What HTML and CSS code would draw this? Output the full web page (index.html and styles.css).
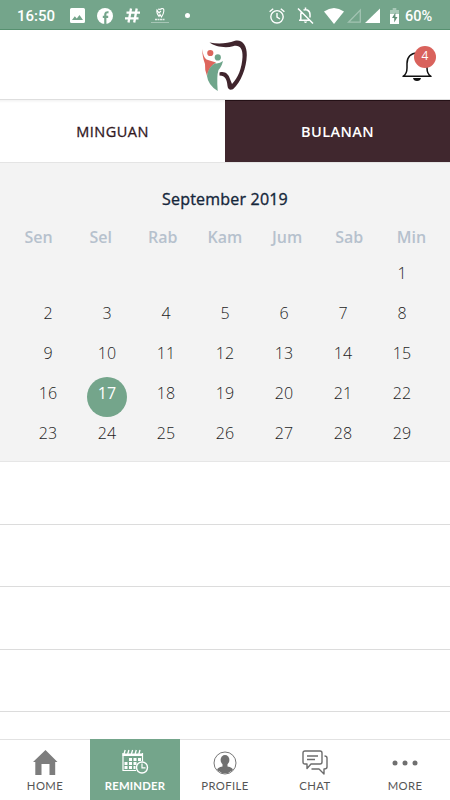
FILE: index.html
```html
<!DOCTYPE html>
<html lang="id">
<head>
<meta charset="utf-8">
<title>Reminder</title>
<link rel="stylesheet" href="styles.css">
</head>
<body>
<div class="app">
  <div class="status">
    <span class="clock">16:50</span>
    <svg class="s-pic" width="15" height="15" viewBox="0 0 15 15"><path fill="#fff" fill-rule="evenodd" d="M1.500 0h12Q15 0 15 1.500v12q0 1.500-1.500 1.500h-12Q0 15 0 13.500v-12Q0 0 1.500 0ZM2 12h11L9.500 7l-2.700 3.500-2-2.300Z"/></svg>
    <svg class="s-fb" width="16" height="16" viewBox="0 0 16 16"><circle cx="8" cy="8" r="8" fill="#fff"/><path d="M8.300 16V6.500q0-2.600 3.200-2.200M5.800 8.900h5.400" fill="none" stroke="#74a58b" stroke-width="2.200"/></svg>
    <svg class="s-hash" width="15" height="15" viewBox="0 0 15 15"><path d="M6 .5 3.500 14.500M11.700.5 9.200 14.500M1.500 4.700H15M0 10.300h13.500" fill="none" stroke="#fff" stroke-width="2.300"/></svg>
    <svg class="s-tooth" width="18" height="16" viewBox="0 0 18 16"><path d="M7 1q2 1 4-.5c3-.5 2 5-.5 8.500L9 6.500 8 8.500C6 6 5.500 4 6 2l2 3 2-2" fill="none" stroke="#fff" stroke-width="1.100"/><path d="M4 11.500h10" stroke="#e4eee9" stroke-width="1.600" stroke-dasharray="2 .5"/><path d="M0 14.500h18" stroke="#bcd4c8" stroke-width=".7"/></svg>
    <svg class="s-dot" width="5" height="5" viewBox="0 0 5 5"><circle cx="2.500" cy="2.500" r="2.500" fill="#fff"/></svg>
    <svg class="s-alarm" width="16" height="16" viewBox="0 0 16 16"><g fill="none" stroke="#fff" stroke-width="1.400"><circle cx="8" cy="8.800" r="6.200"/><path d="M.6 3.700 4.200.8M15.400 3.700 11.800.8M8 5v4.200l3 1.800"/></g></svg>
    <svg class="s-mute" width="17" height="17" viewBox="0 0 17 17"><path d="M3.800 13.200V7.500q0-2 1-3M6.500 3.100q1.700-.8 3.700-.1 2.800 1.200 2.800 4.500v3M2 13.200h11M8.500.5v2M1 1.500l15 15" fill="none" stroke="#fff" stroke-width="1.500"/><path d="M6.800 14.500h3.400q-1.700 3.200-3.400 0Z" fill="#fff"/></svg>
    <svg class="s-wifi" width="20" height="16" viewBox="0 0 20 16"><path d="M0 3.500q10-7 20 0L10 16Z" fill="#fff"/></svg>
    <svg class="s-sig1" width="14" height="15" viewBox="0 0 14 15"><path d="M1.500 14.200 13.300 2v12.200Z" fill="none" stroke="#a2c3b2" stroke-width="1.300"/></svg>
    <svg class="s-sig2" width="15" height="15" viewBox="0 0 15 15"><path d="M0 15 15 .5V15Z" fill="#fff"/></svg>
    <svg class="s-bat" width="9" height="16" viewBox="0 0 9 16"><path d="M0 2h2.700V0h3.600v2H9v4H0Z" fill="#a9c9b8"/><path d="M0 6h9v10H0Z" fill="#fff"/><path d="M5.400 4.500 2 10h2.200v4.500L7.500 9H5.400Z" fill="#619078"/></svg>
    <span class="percent">60%</span>
  </div>

  <header class="header">
    <svg class="logo" width="46" height="50" viewBox="0 0 46 50">
      <path d="M7.500 1.500C17 3.500 25 2.500 33-.2 40-1.800 45 4 44.800 14 44.500 27 39 41 31 48.300 28 49.500 26 48.500 25.500 45 25 39 23.500 34.500 17.500 34.500V31.500C23 30 26.500 33 28 38L30 43C36 37 40 27 40.500 16 41 7 37 3.500 31 5.300 23 7.500 13 5.500 7.500 1.500Z" fill="#40252d"/>
      <path d="M.4 8Q1 16 4.500 18.500L14 21.500Q6.500 26 5 35 2.500 29 3 23 0 15 .4 8Z" fill="#dd665d"/>
      <path d="M21 20Q19.500 26 16.500 29 14.500 35 15.700 50 6 44 5 35 6 26 13 22.300 17.500 23 21 20Z" fill="#6fa58b"/>
      <circle cx="8.300" cy="12" r="3.100" fill="#dd665d"/><circle cx="15.800" cy="16.400" r="3.100" fill="#6fa58b"/>
    </svg>
    <div class="bell">
      <svg width="30" height="31" viewBox="0 0 30 31"><path d="M1 25.300Q5 23 5 17V12.500C5 6 9 2 15 2s10 4 10 10.500V17q0 6 4 8.300Z" fill="#fff" stroke="#111" stroke-width="1.500" stroke-linejoin="round"/><path d="M11 27h8q-.5 3-4 3T11 27Z" fill="#111"/></svg>
      <span class="badge">4</span>
    </div>
  </header>

  <div class="tabs"><div class="tab">MINGUAN</div><div class="tab active">BULANAN</div></div>

  <section class="calendar">
    <h1 class="month">September 2019</h1>
    <div class="week"><span>Sen</span><span>Sel</span><span>Rab</span><span>Kam</span><span>Jum</span><span>Sab</span><span>Min</span></div>
    <div class="days">
      <span class="first">1</span>
      <span>2</span><span>3</span><span>4</span><span>5</span><span>6</span><span>7</span><span>8</span>
      <span>9</span><span>10</span><span>11</span><span>12</span><span>13</span><span>14</span><span>15</span>
      <span>16</span><span class="today">17</span><span>18</span><span>19</span><span>20</span><span>21</span><span>22</span>
      <span>23</span><span>24</span><span>25</span><span>26</span><span>27</span><span>28</span><span>29</span>
    </div>
  </section>

  <div class="list"><div class="row"></div><div class="row"></div><div class="row"></div><div class="row"></div></div>

  <nav class="nav">
    <div class="item"><svg width="26" height="26" viewBox="0 0 26 26"><path d="M13.500 0 25.500 12h-2.300v13h-5.700V14H9.500v11H3.300V12H1Z" fill="#7d7d7d"/></svg><span class="label">HOME</span></div>
    <div class="item on"><svg width="26" height="26" viewBox="0 0 26 26"><path d="M1 3v17.500h13M20.500 3v8.500" fill="none" stroke="#fff" stroke-width="1.200"/><path d="M.5 3.500h20.500v2.500H.5Z" fill="#fff"/><path d="m2 4 1.200-4M5.700 4 6.900 0M9.400 4 10.600 0M13.100 4 14.300 0M16.800 4 18 0" stroke="#fff" stroke-width="1.300"/><path d="M7 8h3v3H7ZM11.500 8h3v3h-3ZM16 8h3v3h-3ZM2.500 12h3v3h-3ZM7 12h3v3H7ZM11.500 12h3v3h-3ZM2.500 16h3v3h-3ZM7 16h3v3H7ZM11.500 16h2v3h-2Z" fill="#fff"/><circle cx="20" cy="17.500" r="5.500" fill="#74a58b" stroke="#fff" stroke-width="1.400"/><path d="M20 13.500v4.300h3.500" fill="none" stroke="#fff" stroke-width="1.200"/></svg><span class="label">REMINDER</span></div>
    <div class="item"><svg width="26" height="26" viewBox="0 0 26 26"><defs><clipPath id="face"><circle cx="13" cy="13" r="10.300"/></clipPath></defs><circle cx="13" cy="13" r="11" fill="#fff" stroke="#777" stroke-width="1"/><g fill="#707070" clip-path="url(#face)"><ellipse cx="13" cy="10" rx="4.400" ry="5"/><path d="M10.500 14h5v2.500q5 .5 6.500 4.500v4H4v-4q1.500-4 6.500-4.500Z"/></g></svg><span class="label">PROFILE</span></div>
    <div class="item"><svg width="26" height="26" viewBox="0 0 26 26"><g fill="none" stroke="#6c6c6c" stroke-width="1.400" stroke-linejoin="round"><path d="M3 1h15q2 0 2 2v9q0 2-2 2H9l-4 4.500V14H3q-2 0-2-2V3q0-2 2-2ZM5 6h11M5 9.500h8"/><path d="M22.500 6q2.500 0 2.500 2v9q0 2-3 2v5l-5-5H9.500"/></g></svg><span class="label">CHAT</span></div>
    <div class="item"><svg width="26" height="26" viewBox="0 0 26 26"><g fill="#707070"><circle cx="3" cy="13" r="2.500"/><circle cx="13" cy="13" r="2.500"/><circle cx="23" cy="13" r="2.500"/></g></svg><span class="label">MORE</span></div>
  </nav>
</div>
</body>
</html>
```
FILE: styles.css
```css
* { box-sizing: border-box; }
body { margin: 0; background: #fff; font-family: "Open Sans", "Noto Sans", sans-serif; }
svg { display: block; flex: none; overflow: visible; }
.app { width: 450px; height: 800px; display: flex; flex-direction: column; overflow: hidden; }

.status { height: 30px; flex: none; display: flex; align-items: center; background: #74a58b; border-bottom: 1px solid #56906f; color: #fff; padding: 2px 0 0 17px; font: 500 15px/27px Roboto, sans-serif; }
.clock { width: 53px; padding-top: 1px; }
.s-fb { margin-left: 12px; }
.s-hash { margin-left: 12px; }
.s-tooth { margin-left: 11px; }
.s-dot { margin-left: 16px; }
.s-alarm { margin-left: 79px; }
.s-mute { margin-left: 12px; }
.s-wifi { margin-left: 10px; }
.s-sig1 { margin-left: 3px; }
.s-sig2 { margin-left: 4px; }
.s-bat { margin-left: 10px; }
.percent { margin-left: 6px; padding-top: 1px; font-size: 14.5px; }

.header { height: 70px; flex: none; display: flex; justify-content: space-between; padding: 11px 17px 0 202px; border-bottom: 1px solid #dedede; }
.bell { position: relative; width: 31px; padding-top: 10px; }
.badge { position: absolute; left: 12px; top: 5px; width: 22px; height: 22px; border-radius: 50%; background: #d9625c; color: #fff; text-align: center; font: 12px/20px "Open Sans", sans-serif; }

.tabs { height: 63px; flex: none; display: flex; border-bottom: 1px solid #e4e4e4; }
.tab { flex: 1; text-align: center; color: #31171e; font-size: 14.5px; font-weight: 400; letter-spacing: .5px; line-height: 63px; -webkit-text-stroke: .3px; background: linear-gradient(#f3f3f3, #fff 3px); }
.tab.active { background: #40272e; color: #fff; font-weight: 600; letter-spacing: .4px; -webkit-text-stroke: 0; border-top: 1px solid #241016; line-height: 61px; }

.calendar { height: 299px; flex: none; background: #f3f3f3; border-bottom: 1px solid #e6e6e6; }
.month { margin: 0; padding-top: 24px; text-align: center; font-size: 16px; font-weight: 400; letter-spacing: .2px; line-height: 24px; color: #14263a; -webkit-text-stroke: .35px; }
.week { display: grid; grid-template-columns: repeat(7, 1fr); margin: 14px 7.5px 0; text-align: center; color: #b6c1cd; font-size: 16px; font-weight: 600; line-height: 24px; }
.days { display: grid; grid-template-columns: repeat(7, 59px); grid-auto-rows: 40px; justify-content: center; margin-top: 4px; text-align: center; color: #1c1c1c; font-size: 16px; font-weight: 300; line-height: 40px; }
.first { grid-column: 7; }
.today { width: 40px; height: 40px; margin: 4px auto 0; border-radius: 50%; background: #74a58b; color: #fff; line-height: 32px; font-weight: 400; }

.list { flex: 1; overflow: hidden; }
.row { height: 62.5px; border-bottom: 1px solid #dcdcdc; }

.nav { height: 61px; flex: none; display: grid; grid-template-columns: repeat(5, 1fr); border-top: 1px solid #e2e2e2; }
.item { display: flex; flex-direction: column; align-items: center; padding-top: 10px; color: #555; }
.item.on { background: #74a58b; color: #fff; margin-top: -1px; padding-top: 11px; }
.label { margin-top: 2px; font: 400 11.3px/16px Lato, sans-serif; letter-spacing: .4px; white-space: nowrap; }
.on .label { font-weight: 700; letter-spacing: .2px; }
```
